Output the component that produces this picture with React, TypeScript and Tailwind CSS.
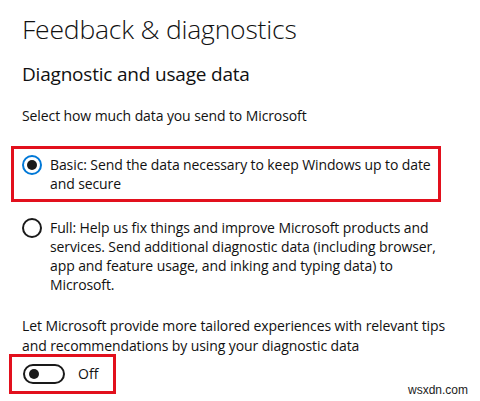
const font = { fontFamily: '"Open Sans", "Noto Sans", sans-serif' };

function Radio({ checked }: { checked: boolean }) {
  return (
    <span
      className={`mt-[0px] flex h-[20px] w-[20px] flex-shrink-0 items-center justify-center rounded-full border-2 ${
        checked ? "border-[#0078d7]" : "border-[#1a1a1a]"
      }`}
    >
      {checked && <span className="h-[10px] w-[10px] rounded-full bg-[#1a1a1a]" />}
    </span>
  );
}

export default function App() {
  return (
    <div
      className="relative h-[401px] w-[480px] overflow-hidden bg-white text-[#111]"
      style={font}
    >
      <div className="pl-[22px] pt-[11px]">
        <h1 className="text-[26.5px] font-light leading-[36px] tracking-[-0.2px]">
          Feedback &amp; diagnostics
        </h1>
        <h2 className="mt-[14px] text-[19px] leading-[26px] tracking-[-0.2px]">
          Diagnostic and usage data
        </h2>
        <p className="mt-[19px] text-[14px] leading-[20px] tracking-[-0.1px]">
          Select how much data you send to Microsoft
        </p>
      </div>

      {/* Basic option, outlined */}
      <div className="ml-[11px] mt-[20px] w-[430px] border-[3px] border-[#e2101d] pb-[6px] pl-[8px] pt-[6px]">
        <label className="flex gap-[8px] text-[14px] leading-[19px] tracking-[-0.1px]">
          <Radio checked />
          <span>Basic: Send the data necessary to keep Windows up to date and secure</span>
        </label>
      </div>

      <label className="ml-[22px] mt-[16px] flex w-[420px] gap-[8px] text-[14px] leading-[19px] tracking-[-0.1px]">
        <Radio checked={false} />
        <span>
          Full: Help us fix things and improve Microsoft products and services. Send additional
          diagnostic data (including browser, app and feature usage, and inking and typing data)
          to Microsoft.
        </span>
      </label>

      <p className="ml-[22px] mt-[22px] w-[430px] text-[14px] leading-[20px] tracking-[-0.1px]">
        Let Microsoft provide more tailored experiences with relevant tips and recommendations by
        using your diagnostic data
      </p>

      {/* Toggle, outlined */}
      <div className="-mt-[2px] ml-[9px] flex h-[40px] w-[107px] items-center border-[3px] border-[#e2101d] pl-[11px]">
        <span className="flex h-[20px] w-[42px] items-center rounded-full border-2 border-[#1a1a1a] pl-[4px]">
          <span className="h-[10px] w-[10px] rounded-full bg-[#1a1a1a]" />
        </span>
        <span className="ml-[13px] text-[14px] leading-[20px]">Off</span>
      </div>

      <span
        className="absolute bottom-[4px] right-[12px] text-[12px] leading-[14px] text-[#222]"
        style={{ fontFamily: '"Liberation Sans", sans-serif' }}
      >
        wsxdn.com
      </span>
    </div>
  );
}
